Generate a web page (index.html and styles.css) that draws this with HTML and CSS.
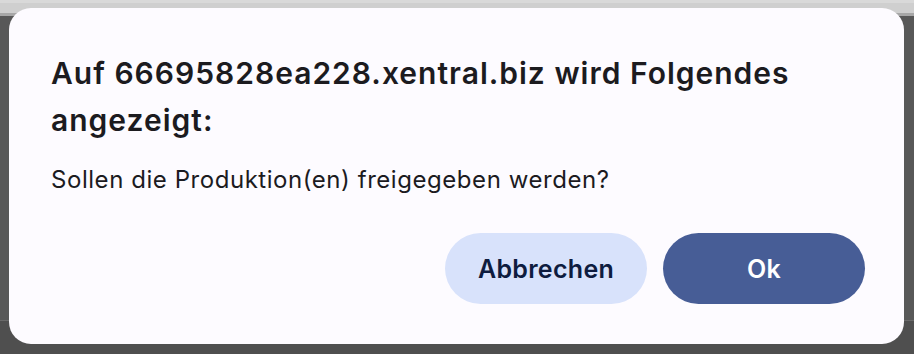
FILE: index.html
```html
<!DOCTYPE html>
<html lang="de">
<head>
<meta charset="utf-8">
<title>Dialog</title>
<link rel="stylesheet" href="styles.css">
</head>
<body>
  <div class="dialog" role="alertdialog">
    <h1 class="dialog-title">Auf 66695828ea228.xentral.biz wird Folgendes angezeigt:</h1>
    <p class="dialog-message">Sollen die Produktion(en) freigegeben werden?</p>
    <div class="dialog-actions">
      <button class="btn btn-cancel" type="button">Abbrechen</button>
      <button class="btn btn-ok" type="button">Ok</button>
    </div>
  </div>
</body>
</html>
```

FILE: styles.css
```css
html, body {
  margin: 0;
  height: 100%;
}

body {
  padding-top: 8px;
  box-sizing: border-box;
  font-family: Inter, "Noto Sans", "Liberation Sans", sans-serif;
  background: linear-gradient(to bottom,
    #d9d9d9 0, #d9d9d9 3px,
    #cfcfcf 3px, #cfcfcf 13px,
    #a7a7a7 13px, #a7a7a7 16px,
    #585858 16px, #585858 320px,
    #6a6a6a 320px, #6a6a6a 321px,
    #4f4f4f 321px);
}

.dialog {
  margin-left: 9px;
  width: 895px;
  height: 336px;
  box-sizing: border-box;
  padding: 42px 39px 40px 42px;
  background: #fdfbff;
  border-radius: 22px;
  display: flex;
  flex-direction: column;
}

.dialog-title {
  margin: 0;
  font-size: 30px;
  line-height: 47px;
  font-weight: 600;
  letter-spacing: 1px;
  color: #1c1b1f;
}

.dialog-message {
  margin: 20px 0 0;
  font-size: 24px;
  line-height: 32px;
  font-weight: 400;
  letter-spacing: 0.55px;
  color: #1c1b1f;
}

.dialog-actions {
  margin-top: auto;
  display: flex;
  justify-content: flex-end;
  gap: 16px;
}

.btn {
  width: 202px;
  height: 71px;
  border: none;
  border-radius: 36px;
  font-family: inherit;
  font-size: 25px;
  font-weight: 600;
  letter-spacing: 0.3px;
  padding: 0;
}

.btn-cancel {
  background: #d8e2fb;
  color: #0e1c3f;
}

.btn-ok {
  background: #475d96;
  color: #ffffff;
}
```
